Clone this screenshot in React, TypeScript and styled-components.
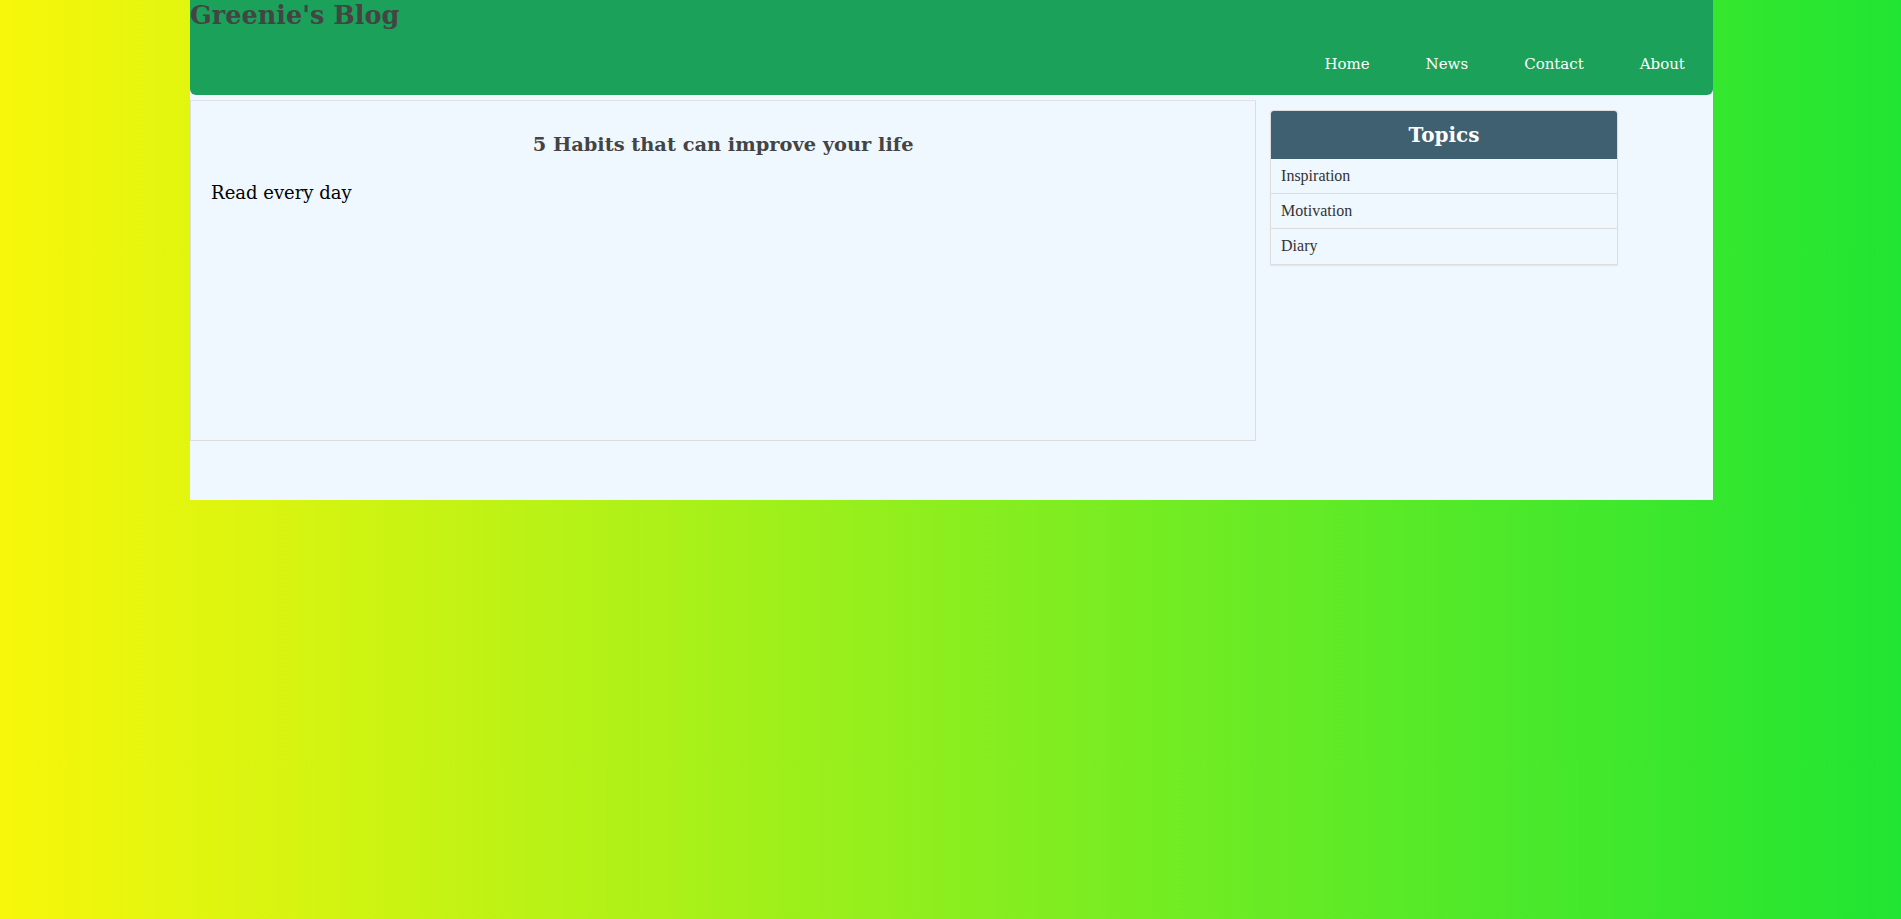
import React from "react";
import styled, { createGlobalStyle } from "styled-components";

const GlobalStyle = createGlobalStyle`
  html, body {
    margin: 0;
    min-height: 100%;
  }
  body {
    min-height: 100vh;
    background: linear-gradient(to right, #f7f70a, #20e532);
    font-family: "DejaVu Serif", "Liberation Serif", serif;
  }
`;

const Page = styled.div`
  width: calc(80% + 2px);
  margin: 0 0 0 10%;
  background-color: #f0f8ff;
  padding-bottom: 59px;
`;

const Header = styled.header`
  height: 95px;
  background-color: #1ba159;
  border-radius: 0 0 6px 6px;
  display: flex;
  flex-direction: column;
`;

const BlogTitle = styled.h1`
  margin: 0;
  font-size: 25.5px;
  line-height: 30px;
  font-weight: 700;
  color: #444;
`;

const Nav = styled.nav`
  display: flex;
  justify-content: flex-end;
  margin-top: 22px;
`;

const NavLink = styled.a`
  color: #fff;
  font-size: 15px;
  text-decoration: none;
  padding: 0 28px;
  line-height: 24px;
`;

const Main = styled.main`
  display: flex;
  margin-top: 5px;
`;

const Article = styled.article`
  width: 70%;
  min-height: 341px;
  box-sizing: border-box;
  border: 1px solid #ddd;
  border-top-color: #e2e2e2;
  padding: 32px 20px;
`;

const ArticleTitle = styled.h2`
  margin: 0 0 26px;
  text-align: center;
  font-size: 19.4px;
  color: #444;
`;

const ArticleText = styled.p`
  margin: 0;
  font-size: 18px;
  color: #000;
`;

const Aside = styled.aside`
  flex: 1;
  padding: 10px 14px;
`;

const TopicsCard = styled.div`
  width: 348px;
  box-sizing: border-box;
  border: 1px solid #ddd;
  border-radius: 3px 3px 0 0;
  box-shadow: 0 1px 1px rgba(0, 0, 0, 0.08);
`;

const TopicsHeader = styled.h3`
  margin: 0;
  height: 48px;
  line-height: 48px;
  text-align: center;
  background-color: #3f6070;
  color: #fff;
  font-size: 20px;
  border-radius: 3px 3px 0 0;
`;

const TopicItem = styled.div<{ last?: boolean }>`
  height: 35px;
  box-sizing: border-box;
  padding-left: 10px;
  line-height: 33px;
  font-family: "Liberation Serif", serif;
  font-size: 16px;
  color: #333;
  border-bottom: ${(p) => (p.last ? "none" : "1px solid #ddd")};
`;

const links = ["Home", "News", "Contact", "About"];
const topics = ["Inspiration", "Motivation", "Diary"];

export default function App() {
  return (
    <>
      <GlobalStyle />
      <Page>
        <Header>
          <BlogTitle>Greenie's Blog</BlogTitle>
          <Nav>
            {links.map((l) => (
              <NavLink key={l} href="#">
                {l}
              </NavLink>
            ))}
          </Nav>
        </Header>
        <Main>
          <Article>
            <ArticleTitle>5 Habits that can improve your life</ArticleTitle>
            <ArticleText>Read every day</ArticleText>
          </Article>
          <Aside>
            <TopicsCard>
              <TopicsHeader>Topics</TopicsHeader>
              {topics.map((t, i) => (
                <TopicItem key={t} last={i === topics.length - 1}>
                  {t}
                </TopicItem>
              ))}
            </TopicsCard>
          </Aside>
        </Main>
      </Page>
    </>
  );
}
